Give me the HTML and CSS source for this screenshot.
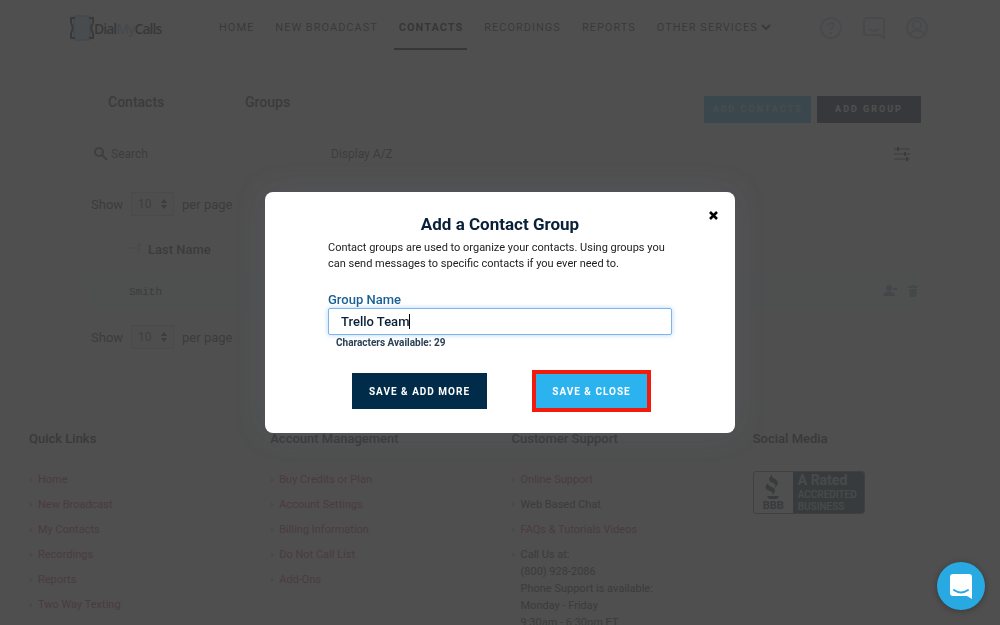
FILE: index.html
```
<!DOCTYPE html>
<html lang="en">

<head>
    <meta charset="utf-8">
    <title>DialMyCalls - Contacts</title>
    <link rel="stylesheet" href="styles.css">
</head>

<body>
    <header class="header">
        <a class="logo" href="#">
            <svg width="24" height="26" viewBox="0 0 24 26" fill="none">
                <rect x="4" y="1" width="16" height="24" rx="2" fill="#b9dcf2" stroke="#8fc0e0" stroke-width="2"/>
                <path d="M5 3H1v5M1 18v5h4M19 3h4v5M23 18v5h-4M1 8c2 3 2 7 0 10M23 8c-2 3-2 7 0 10" stroke="#123" stroke-width="2"/>
            </svg>
            <span>Dial<em>My</em>Calls</span>
        </a>
        <nav class="nav">
            <a href="#">HOME</a>
            <a href="#">NEW BROADCAST</a>
            <a href="#" class="active">CONTACTS</a>
            <a href="#">RECORDINGS</a>
            <a href="#">REPORTS</a>
            <a href="#">OTHER SERVICES<svg width="10" height="8" viewBox="0 0 10 8" fill="none" stroke="currentColor" stroke-width="2"><path d="M1 2l4 4 4-4"/></svg></a>
        </nav>
        <div class="header-icons">
            <a href="#" aria-label="Help">
                <svg width="22" height="22" viewBox="0 0 22 22" fill="none" stroke="currentColor" stroke-width="2"><circle cx="11" cy="11" r="10"/><path d="M8 9c0-4 6-4 6-1 0 2-3 2-3 5M11 15v2"/></svg>
            </a>
            <a href="#" aria-label="Chat">
                <svg width="22" height="22" viewBox="0 0 22 22" fill="none" stroke="currentColor" stroke-width="2"><path d="M4 1h14q3 0 3 3v17l-4-3H4q-3 0-3-3V4q0-3 3-3zM6 12q5 4 10 0"/></svg>
            </a>
            <a href="#" aria-label="Account">
                <svg width="22" height="22" viewBox="0 0 22 22" fill="none" stroke="currentColor" stroke-width="2"><circle cx="11" cy="11" r="10"/><circle cx="11" cy="8" r="4"/><path d="M4 18c1-6 13-6 14 0"/></svg>
            </a>
        </div>
    </header>

    <main class="contacts">
        <div class="tabs">
            <a href="#" class="tab current">Contacts</a>
            <a href="#" class="tab">Groups</a>
            <div class="actions">
                <button type="button" class="btn-add light">ADD CONTACTS</button>
                <button type="button" class="btn-add dark">ADD GROUP</button>
            </div>
        </div>
        <div class="card">
            <div class="toolbar">
                <svg width="14" height="14" viewBox="0 0 14 14" fill="none" stroke="#555" stroke-width="2"><circle cx="5" cy="5" r="4"/><path d="M8 8l5 5"/></svg>
                <input type="search" class="search" placeholder="Search" aria-label="Search">
                <a href="#" class="display">Display A/Z</a>
                <svg class="filter" width="16" height="16" viewBox="0 0 16 16" fill="none" stroke="#333" stroke-width="1"><path d="M0 3h16M0 8h16M0 13h16"/><path d="M4 1v4M11 6v4M13 11v4" stroke-width="2"/></svg>
            </div>
            <div class="per-page first">
                <label for="showTop">Show</label>
                <span class="pick">
                    <select id="showTop"><option>10</option><option>25</option></select>
                    <svg width="6" height="10" viewBox="0 0 6 10" fill="#444"><path d="M0 4l3-4 3 4zM0 6l3 4 3-4z"/></svg>
                </span>
                per page
            </div>
            <table class="list">
                <thead>
                    <tr><th colspan="2"><svg width="12" height="12" viewBox="0 0 12 12" fill="none" stroke="#aaa"><path d="M0 6h7M9 11V2M7 4l2-3 2 3"/></svg>Last Name</th></tr>
                </thead>
                <tbody>
                    <tr>
                        <td>Smith</td>
                        <td class="row-icons">
                            <svg width="14" height="12" viewBox="0 0 14 12" fill="#8fa5c8"><circle cx="6" cy="3" r="3"/><path d="M0 11c0-6 12-6 12 0zM10 3h4v2h-4z"/></svg>
                            <svg width="10" height="12" viewBox="0 0 10 12" fill="#8fb5b0"><path d="M0 1h3V0h4v1h3v2H0zM1 4h8l-1 8H2z"/></svg>
                        </td>
                    </tr>
                </tbody>
            </table>
            <div class="per-page">
                <label for="showBottom">Show</label>
                <span class="pick">
                    <select id="showBottom"><option>10</option><option>25</option></select>
                    <svg width="6" height="10" viewBox="0 0 6 10" fill="#444"><path d="M0 4l3-4 3 4zM0 6l3 4 3-4z"/></svg>
                </span>
                per page
            </div>
        </div>
    </main>

    <footer class="footer">
        <section>
            <h3>Quick Links</h3>
            <ul>
                <li><a href="#">Home</a></li>
                <li><a href="#">New Broadcast</a></li>
                <li><a href="#">My Contacts</a></li>
                <li><a href="#">Recordings</a></li>
                <li><a href="#">Reports</a></li>
                <li><a href="#">Two Way Texting</a></li>
            </ul>
        </section>
        <section>
            <h3>Account Management</h3>
            <ul>
                <li><a href="#">Buy Credits or Plan</a></li>
                <li><a href="#">Account Settings</a></li>
                <li><a href="#">Billing Information</a></li>
                <li><a href="#">Do Not Call List</a></li>
                <li><a href="#">Add-Ons</a></li>
            </ul>
        </section>
        <section>
            <h3>Customer Support</h3>
            <ul>
                <li><a href="#">Online Support</a></li>
                <li>Web Based Chat</li>
                <li><a href="#">FAQs &amp; Tutorials Videos</a></li>
                <li>Call Us at:<br>(800) 928-2086<br>Phone Support is available:<br>Monday - Friday<br>9:30am - 6:30pm ET</li>
            </ul>
        </section>
        <section>
            <h3>Social Media</h3>
            <a href="#" class="bbb">
                <span class="bbb-mark">
                    <svg width="18" height="26" viewBox="0 0 18 26" fill="#234"><path d="M8 0c-4 5-4 7 1 9 3 2 3 3 1 6 5-5 5-7 1-10-3-2-4-3-3-5zM4 9c-4 4-3 6 2 8 3 1 3 2 2 4 4-3 4-6 0-8-3-1-4-2-4-4zM3 22h12l-2 3H5z"/></svg>
                    BBB
                </span>
                <span class="bbb-text"><b>A Rated</b>ACCREDITED<br>BUSINESS</span>
            </a>
        </section>
    </footer>

    <div class="overlay">
        <form class="modal" role="dialog" aria-labelledby="modalTitle">
            <button type="button" class="close" aria-label="Close">
                <svg width="9" height="9" viewBox="0 0 9 9" fill="none" stroke="#000" stroke-width="2.6"><path d="M1 1l7 7M8 1L1 8"/></svg>
            </button>
            <h2 id="modalTitle">Add a Contact Group</h2>
            <p class="intro">Contact groups are used to organize your contacts. Using groups you can send messages to specific contacts if you ever need to.</p>
            <label for="groupName">Group Name</label>
            <div class="field">
                <input type="text" id="groupName" value="Trello Team" maxlength="40">
                <span class="caret"></span>
            </div>
            <p class="count">Characters Available: 29</p>
            <div class="buttons">
                <button type="submit" class="btn btn-more">SAVE &amp; ADD MORE</button>
                <button type="submit" class="btn btn-close">SAVE &amp; CLOSE</button>
            </div>
        </form>
    </div>

    <button type="button" class="chat" aria-label="Open chat">
        <svg width="24" height="26" viewBox="0 0 24 26"><path d="M4 1h16q3 0 3 3v22l-5-3H4q-3 0-3-3V4q0-3 3-3z" fill="#fff"/><path d="M5 17q7 5 14 0" fill="none" stroke="#29a9e1" stroke-width="2" stroke-linecap="round"/></svg>
    </button>
</body>

</html>
```
FILE: styles.css
```
* {
    box-sizing: border-box;
}

body {
    margin: 0;
    height: 100vh;
    overflow: hidden; /* page does not scroll while the dialog is open */
    background-color: #fff;
    color: #333;
    font-family: Roboto, Arial, sans-serif;
    font-size: 12px;
}

a {
    text-decoration: none;
}

button {
    font-family: inherit;
    border: none;
    padding: 0;
    cursor: pointer;
}

/* Header */
.header {
    display: flex;
    align-items: center;
    max-width: 860px;
    height: 56px;
    margin: 0 auto;
}

.logo {
    display: flex;
    align-items: center;
    width: 144px;
    font-family: "Open Sans", sans-serif;
    font-size: 14px;
    font-weight: 600;
    letter-spacing: -1px;
    color: #111;
}

.logo em {
    font-style: normal;
    color: #8fc0e0;
}

.nav {
    display: flex;
    gap: 12px;
}

.nav a {
    padding: 14px 4px 13px 5px;
    border-bottom: 2px solid transparent;
    color: #222;
    font-size: 11px;
    font-weight: 400;
    line-height: 15px;
    letter-spacing: 1px;
}

.nav svg {
    margin-left: 3px;
}

.nav .active {
    border-color: #111;
    color: #000;
    font-weight: 700;
}

.header-icons {
    display: flex;
    gap: 21px;
    margin: 0 2px 0 auto;
}

.header-icons a {
    color: #b4c0dc;
}

.header-icons svg {
    display: block;
}

/* Contacts */
.contacts {
    max-width: 864px;
    margin: 24px auto 0;
}

.tabs {
    display: flex;
    align-items: center;
    height: 40px;
}

.tab {
    width: 137px;
    padding: 4px 40px 0;
    color: #333;
    font-size: 14px;
    font-weight: 500;
    line-height: 40px;
}

.actions {
    display: flex;
    gap: 6px;
    margin: 18px 11px 0 auto;
}

.btn-add {
    height: 27px;
    color: #fff;
    font-size: 9px;
    font-weight: 700;
    letter-spacing: 2px;
}

.light {
    width: 107px;
    background-color: #29b6e6;
    color: #b9d8e0;
}

.dark {
    width: 104px;
    background-color: #001b35;
}

.card {
    padding: 16px 14px 16px 22px;
}

.toolbar {
    display: flex;
    align-items: center;
    height: 36px;
    padding: 0 8px 0 4px;
}

.search {
    width: 223px;
    padding: 0 3px;
    border: none;
    background: none;
    font: 12px Roboto, Arial, sans-serif;
}

.search::placeholder {
    color: #444;
}

.display {
    color: #444;
}

.filter {
    margin-left: auto;
}

.per-page {
    display: flex;
    align-items: center;
    gap: 8px;
    height: 54px;
    padding-left: 1px;
    font-size: 13px;
}

.first {
    margin-top: 5px;
}

.pick {
    display: flex;
    align-items: center;
    width: 43px;
    height: 24px;
    padding: 0 6px;
    border: 1px solid #ccc;
    background-color: #f0f0f0;
}

.pick select {
    flex: 1;
    min-width: 0;
    padding: 0;
    border: none;
    background: none;
    color: #555;
    font: 12px Roboto, Arial, sans-serif;
    appearance: none;
}

.list {
    width: 100%;
    border-collapse: collapse;
}

.list th {
    height: 43px;
    padding: 0 0 0 40px;
    font-size: 13px;
    font-weight: 500;
    line-height: 38px;
    text-align: left;
    vertical-align: top;
}

.list th svg {
    margin-right: 6px;
}

.list td {
    height: 36px;
    padding: 0 0 0 39px;
    background-color: #f4faf8;
    font: 11px "Liberation Mono", monospace;
}

.list .row-icons {
    padding-right: 0;
    text-align: right;
}

.row-icons svg {
    margin-left: 4px;
}

/* Footer */
.footer {
    display: grid;
    grid-template-columns: repeat(4, 1fr);
    min-height: 260px;
    margin-top: 20px;
    padding: 31px 6px 0 29px;
    background-color: #eff8f4;
}

.footer h3 {
    margin: 0 0 24px;
    color: #222;
    font-size: 13px;
    font-weight: 500;
    line-height: 16px;
}

.footer ul {
    margin: 0;
    padding: 0;
    list-style: none;
}

.footer li {
    position: relative;
    margin-bottom: 8px;
    padding-left: 9px;
    font-size: 11px;
    line-height: 17px;
}

.footer li::before {
    content: "›";
    position: absolute;
    left: 0;
    color: #888;
}

.footer li a {
    color: #d02f50;
}

.bbb {
    display: flex;
    width: 112px;
    height: 43px;
    border: 1px solid #567;
    border-radius: 3px;
    overflow: hidden;
    color: #234;
}

.bbb-mark {
    display: flex;
    flex-direction: column;
    align-items: center;
    justify-content: center;
    width: 39px;
    font-size: 11px;
    font-weight: 700;
    line-height: 12px;
}

.bbb-text {
    flex: 1;
    padding-left: 5px;
    background-color: #1b3a4e;
    color: #bcc;
    font-size: 10px;
    font-weight: 500;
    line-height: 12px;
}

.bbb-text b {
    display: block;
    font-size: 14px;
    line-height: 17px;
}

/* Dialog */
.overlay {
    position: fixed;
    inset: 0;
    display: flex;
    align-items: center;
    justify-content: center;
    background-color: rgba(60, 60, 60, 0.9);
}

.modal {
    position: relative;
    width: 470px;
    padding: 21px 63px 24px;
    border-radius: 8px;
    background-color: #fff;
    box-shadow: 0 0 32px rgba(120, 130, 170, 0.15);
}

.close {
    position: absolute;
    top: 19px;
    right: 17px;
    background: none;
    line-height: 8px;
}

.modal h2 {
    margin: 0 0 5px;
    color: #0a2038;
    font-size: 17px;
    font-weight: 700;
    line-height: 22px;
    text-align: center;
}

.intro {
    margin: 0 0 20px;
    color: #222;
    font-size: 11px;
    line-height: 16px;
}

.modal label {
    display: block;
    color: #1a6096;
    font-size: 13px;
    font-weight: 500;
    line-height: 16px;
}

.field {
    position: relative;
}

.field input {
    display: block;
    width: 100%;
    height: 27px;
    padding: 0 12px;
    border: 1px solid #7fb5ea;
    border-radius: 2px;
    outline: none;
    box-shadow: 0 0 5px rgba(100, 175, 240, 0.5);
    color: #0a2038;
    font: 500 13px Roboto, Arial, sans-serif;
}

.caret {
    position: absolute;
    top: 6px;
    left: 81px;
    width: 1px;
    height: 15px;
    background-color: #000;
}

.count {
    margin: 0 0 22px 8px;
    color: #2b4054;
    font-size: 10px;
    font-weight: 700;
    line-height: 16px;
}

.buttons {
    display: flex;
    justify-content: space-between;
    align-items: center;
    padding: 0 21px 0 24px;
}

.btn {
    height: 36px;
    color: #fff;
    font-size: 10px;
    font-weight: 700;
    letter-spacing: 1px;
}

.btn-more {
    width: 135px;
    background-color: #002b49;
}

.btn-close {
    width: 119px;
    height: 42px;
    margin: -3px 0;
    border: 4px solid #f31b0c;
    background-color: #2bb3f0;
}

.chat {
    position: fixed;
    right: 15px;
    bottom: 15px;
    display: flex;
    align-items: center;
    justify-content: center;
    width: 48px;
    height: 48px;
    border-radius: 50%;
    background-color: #29a9e1;
    box-shadow: 0 1px 6px rgba(0, 0, 0, 0.3);
}
```
